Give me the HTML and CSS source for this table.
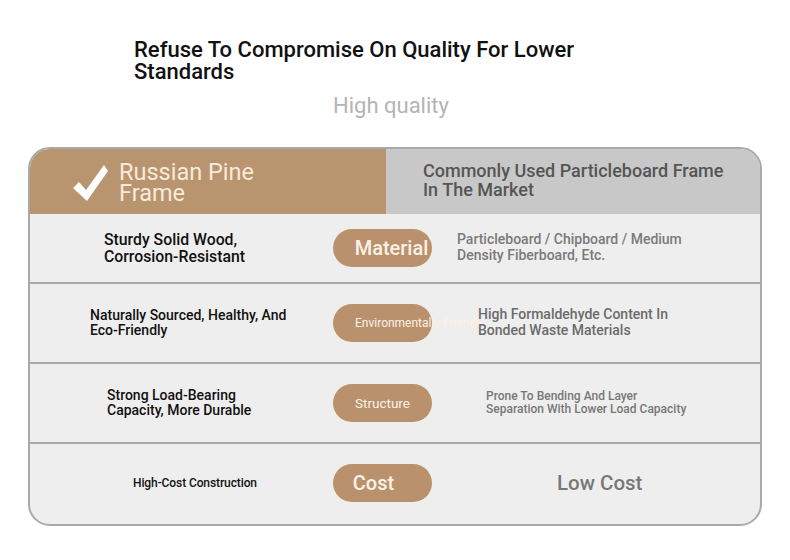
FILE: index.html
```html
<!DOCTYPE html>
<html>
<head>
<meta charset="utf-8">
<link rel="stylesheet" href="styles.css">
</head>
<body>
<div class="page">
  <h1 class="title">Refuse To Compromise On Quality For Lower<br>Standards</h1>
  <p class="subtitle">High quality</p>
  <div class="table">
    <div class="head">
      <div class="head-left">
        <svg class="check" width="36" height="37" viewBox="0 0 36 37"><polygon points="0,23 6,17 13,25 31,0 35,6 14,36" fill="#fff"/></svg>
        <span class="head-left-text">Russian Pine<br>Frame</span>
      </div>
      <div class="head-right">Commonly Used Particleboard Frame<br>In The Market</div>
    </div>
    <div class="row row-1">
      <div class="cell-left l1">Sturdy Solid Wood,<br>Corrosion-Resistant</div>
      <div class="pill p-big">Material</div>
      <div class="cell-right r1">Particleboard / Chipboard / Medium<br>Density Fiberboard, Etc.</div>
    </div>
    <div class="row row-2">
      <div class="cell-left l2">Naturally Sourced, Healthy, And<br>Eco-Friendly</div>
      <div class="pill p-env"><span>Environmentally Friendly</span></div>
      <div class="cell-right r2">High Formaldehyde Content In<br>Bonded Waste Materials</div>
    </div>
    <div class="row row-3">
      <div class="cell-left l3">Strong Load-Bearing<br>Capacity, More Durable</div>
      <div class="pill p-small">Structure</div>
      <div class="cell-right r3">Prone To Bending And Layer<br>Separation With Lower Load Capacity</div>
    </div>
    <div class="row row-4">
      <div class="cell-left l4">High-Cost Construction</div>
      <div class="pill p-cost">Cost</div>
      <div class="cell-right r4">Low Cost</div>
    </div>
  </div>
</div>
</body>
</html>
```

FILE: styles.css
```css
* { box-sizing: border-box; }
html, body { margin: 0; padding: 0; background: #fff; }
body { font-family: Roboto, "Noto Sans", sans-serif; width: 790px; height: 560px; overflow: hidden; }
.page { padding: 39px 28px 0 28px; }
.title {
  margin: 0 0 0 106px;
  font-size: 22px; line-height: 22px; font-weight: 500; color: #111;
}
.subtitle {
  margin: 11px 0 0 0; text-align: center;
  font-size: 22px; line-height: 24px; font-weight: 400; color: #b4b4b4;
  padding-right: 8px;
}
.table {
  margin-top: 29px;
  width: 734px; height: 379px;
  border: 2px solid #a9a9a9; border-radius: 22px;
  overflow: hidden; background: #efeeee;
}
.head { display: flex; height: 65px; }
.head-left {
  width: 356px; background: #b8956f;
  display: flex; align-items: center; padding-left: 43px;
}
.check { margin-top: 3px; }
.head-left-text {
  margin-left: 10px; color: #f8eadb; font-size: 23.5px; line-height: 21px; font-weight: 400;
  margin-top: 2px;
}
.head-right {
  flex: 1; background: #c8c8c8; color: #555;
  font-size: 18px; line-height: 19px; font-weight: 500;
  display: flex; align-items: center; padding-left: 37px; padding-bottom: 3px;
}
.row {
  display: grid; grid-template-columns: 303px 99px 1fr; align-items: center;
  border-top: 2px solid #a9a9a9;
}
.row-1 { height: 68px; border-top: none; }
.row-2, .row-3 { height: 80px; }
.row-4 { height: 80px; }
.cell-left { color: #111; font-weight: 500; }
.cell-right { color: #757575; font-weight: 500; }
.l1 { padding-left: 74px; font-size: 15.8px; line-height: 17px; }
.l2 { padding-left: 60px; font-size: 14px; line-height: 15px; }
.l3 { padding-left: 77px; font-size: 14px; line-height: 15px; }
.l4 { padding-left: 103px; font-size: 12px; letter-spacing: -0.1px; }
.r1 { padding-left: 25px; font-size: 14px; line-height: 16px; color: #7a7a7a; margin-top: -2px; }
.r2 { padding-left: 46px; font-size: 14px; line-height: 16px; color: #6b6b6b; margin-top: -3px; }
.r3 { padding-left: 54px; font-size: 12px; line-height: 13px; color: #777; }
.r4 { padding-left: 125px; font-size: 20.5px; color: #777; }
.pill {
  height: 38px; border-radius: 19px; background: #b9926d;
  color: #fbf1e6; display: flex; align-items: center; justify-content: center;
  white-space: nowrap;
}
.p-big { font-size: 20px; font-weight: 500; padding-left: 18px; }
.p-env { justify-content: flex-start; padding-left: 22px; font-size: 12px; overflow: visible; }
.p-env span { color: #fbf1e6; }
.p-small { font-size: 13.5px; }
.p-cost { font-size: 20px; font-weight: 500; padding-right: 18px; }
```
